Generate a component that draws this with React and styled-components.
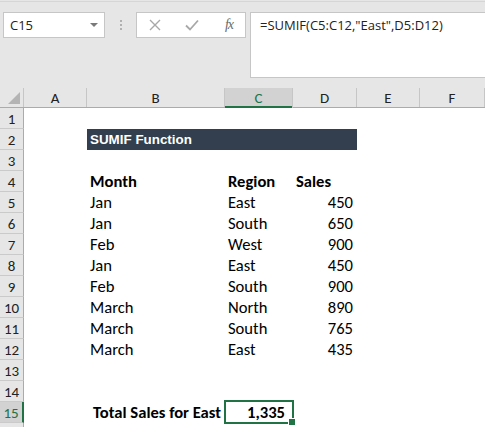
import styled, { createGlobalStyle } from "styled-components";

const GREEN = "#217346";
const COLS = "24px 63px 138px 68px 64px 63px 65px";

const GlobalStyle = createGlobalStyle`
  * { box-sizing: border-box; }
  body {
    margin: 0;
    background: #ffffff;
    overflow: hidden;
    font-family: Calibri, Carlito, Lato, sans-serif;
  }
`;

const Window = styled.div`
  width: 485px;
  height: 427px;
  overflow: hidden;
  background: #ffffff;
`;

const FormulaBar = styled.div`
  height: 88px;
  background: #e6e6e6;
  border-top: 1px solid #e6e6e6;
  box-shadow: inset 0 2px 0 -1px #d6d6d6;
  display: flex;
  align-items: flex-start;
  padding: 11px 0 0 3px;
`;

const NameBox = styled.div`
  width: 102px;
  height: 26px;
  background: #ffffff;
  border: 1px solid #c6c6c6;
  display: flex;
  align-items: center;
  justify-content: space-between;
  padding: 0 6px 0 6px;
  font-family: "Open Sans", "Noto Sans", sans-serif;
  font-size: 13px;
  color: #222;
`;

const Caret = styled.span`
  width: 0;
  height: 0;
  border-left: 4px solid transparent;
  border-right: 4px solid transparent;
  border-top: 4px solid #7a7a7a;
`;

const Grip = styled.div`
  width: 31px;
  height: 26px;
  display: flex;
  flex-direction: column;
  align-items: center;
  justify-content: center;
  gap: 2px;
  span {
    width: 2px;
    height: 2px;
    background: #b0b0b0;
  }
`;

const ButtonBox = styled.div`
  width: 110px;
  height: 26px;
  background: #ffffff;
  border: 1px solid #c6c6c6;
  display: flex;
  align-items: center;
  padding: 0 0 0 11px;
`;

const IconSlot = styled.div`
  width: ${(p) => p.$w}px;
  display: flex;
  align-items: center;
  justify-content: center;
`;

const Fx = styled.span`
  font-family: "Liberation Serif", serif;
  font-style: italic;
  font-size: 14px;
  color: #6a6a6a;
  letter-spacing: -1px;
`;

const FormulaInput = styled.div`
  flex: 1;
  margin-left: 4px;
  height: 66px;
  background: #ffffff;
  border: 1px solid #c6c6c6;
  border-right: none;
  padding: 3px 0 0 9px;
  font-family: "Open Sans", "Noto Sans", sans-serif;
  font-size: 13px;
  color: #222;
`;

const Sheet = styled.div`
  display: flex;
  flex-direction: column;
`;

const HeaderRow = styled.div`
  display: grid;
  grid-template-columns: ${COLS};
  height: 20px;
  background: #e6e6e6;
  border-bottom: 1px solid #ababab;
`;

const Corner = styled.div`
  position: relative;
  border-right: 1px solid #c6c6c6;
  &::after {
    content: "";
    position: absolute;
    right: 3px;
    bottom: 3px;
    width: 0;
    height: 0;
    border-left: 12px solid transparent;
    border-bottom: 12px solid #b4b4b4;
  }
`;

const ColHeader = styled.div`
  display: flex;
  align-items: center;
  justify-content: center;
  font-size: 15px;
  color: ${(p) => (p.$selected ? GREEN : "#222")};
  background: ${(p) => (p.$selected ? "#d2d2d2" : "transparent")};
  border-right: 1px solid #c6c6c6;
  box-shadow: ${(p) => (p.$selected ? `inset 0 -2px 0 ${GREEN}` : "none")};
  margin-bottom: ${(p) => (p.$selected ? "-1px" : "0")};
`;

const Row = styled.div`
  display: grid;
  grid-template-columns: ${COLS};
  height: 21px;
`;

const RowHeader = styled.div`
  display: flex;
  align-items: center;
  justify-content: center;
  font-size: 15px;
  padding-top: 1px;
  color: ${(p) => (p.$selected ? GREEN : "#222")};
  background: ${(p) => (p.$selected ? "#d2d2d2" : "#e6e6e6")};
  border-bottom: 1px solid #cacaca;
  border-right: ${(p) => (p.$selected ? `2px solid ${GREEN}` : "1px solid #ababab")};
`;

const Cell = styled.div`
  position: relative;
  grid-column: ${(p) => p.$col} / span ${(p) => p.$span || 1};
  display: flex;
  align-items: flex-end;
  justify-content: ${(p) => (p.$right ? "flex-end" : "flex-start")};
  padding: 0 ${(p) => (p.$right ? "4px" : "3px")} 1px 3px;
  font-size: 16.6px;
  line-height: 19px;
  font-weight: ${(p) => (p.$bold ? 700 : 400)};
  color: #000;
  white-space: nowrap;
`;

const TitleCell = styled(Cell)`
  background: #333f4f;
  color: #ffffff;
  align-items: center;
  padding: 0 3px 0 3px;
  margin-bottom: 0;
  font-family: "Liberation Sans", Arial, sans-serif;
  font-size: 13.4px;
`;

const ActiveCell = styled(Cell)`
  outline: 2px solid ${GREEN};
  outline-offset: -1px;
  margin-top: -1px;
  padding-right: 8px;
  &::after {
    content: "";
    position: absolute;
    right: -3px;
    bottom: -3px;
    width: 6px;
    height: 6px;
    background: ${GREEN};
    border: 1px solid #ffffff;
  }
`;

const data = [
  ["Jan", "East", 450],
  ["Jan", "South", 650],
  ["Feb", "West", 900],
  ["Jan", "East", 450],
  ["Feb", "South", 900],
  ["March", "North", 890],
  ["March", "South", 765],
  ["March", "East", 435],
];

const columns = ["A", "B", "C", "D", "E", "F"];

const XIcon = () => (
  <svg width="12" height="12" viewBox="0 0 12 12">
    <path d="M1 1L11 11M11 1L1 11" stroke="#a8a8a8" strokeWidth="1.4" fill="none" />
  </svg>
);

const CheckIcon = () => (
  <svg width="14" height="12" viewBox="0 0 14 12">
    <path d="M1 6.5L5 10.5L13 1.5" stroke="#a8a8a8" strokeWidth="1.8" fill="none" />
  </svg>
);

const App = () => {
  return (
    <Window>
      <GlobalStyle />
      <FormulaBar>
        <NameBox>
          C15
          <Caret />
        </NameBox>
        <Grip>
          <span />
          <span />
          <span />
        </Grip>
        <ButtonBox>
          <IconSlot $w={14}>
            <XIcon />
          </IconSlot>
          <IconSlot $w={60}>
            <CheckIcon />
          </IconSlot>
          <IconSlot $w={14}>
            <Fx>fx</Fx>
          </IconSlot>
        </ButtonBox>
        <FormulaInput>=SUMIF(C5:C12,"East",D5:D12)</FormulaInput>
      </FormulaBar>

      <Sheet>
        <HeaderRow>
          <Corner />
          {columns.map((c) => (
            <ColHeader key={c} $selected={c === "C"}>
              {c}
            </ColHeader>
          ))}
        </HeaderRow>

        <Row>
          <RowHeader>1</RowHeader>
        </Row>
        <Row>
          <RowHeader>2</RowHeader>
          <TitleCell $col={3} $span={3} $bold>
            SUMIF Function
          </TitleCell>
        </Row>
        <Row>
          <RowHeader>3</RowHeader>
        </Row>
        <Row>
          <RowHeader>4</RowHeader>
          <Cell $col={3} $bold>Month</Cell>
          <Cell $col={4} $bold>Region</Cell>
          <Cell $col={5} $bold>Sales</Cell>
        </Row>
        {data.map(([month, region, sales], i) => (
          <Row key={i}>
            <RowHeader>{i + 5}</RowHeader>
            <Cell $col={3}>{month}</Cell>
            <Cell $col={4}>{region}</Cell>
            <Cell $col={5} $right>
              {sales}
            </Cell>
          </Row>
        ))}
        <Row>
          <RowHeader>13</RowHeader>
        </Row>
        <Row>
          <RowHeader>14</RowHeader>
        </Row>
        <Row>
          <RowHeader $selected>15</RowHeader>
          <Cell $col={3} $right $bold>
            Total Sales for East
          </Cell>
          <ActiveCell $col={4} $right $bold>
            1,335
          </ActiveCell>
        </Row>
        <Row>
          <RowHeader />
        </Row>
      </Sheet>
    </Window>
  );
};

export default App;
